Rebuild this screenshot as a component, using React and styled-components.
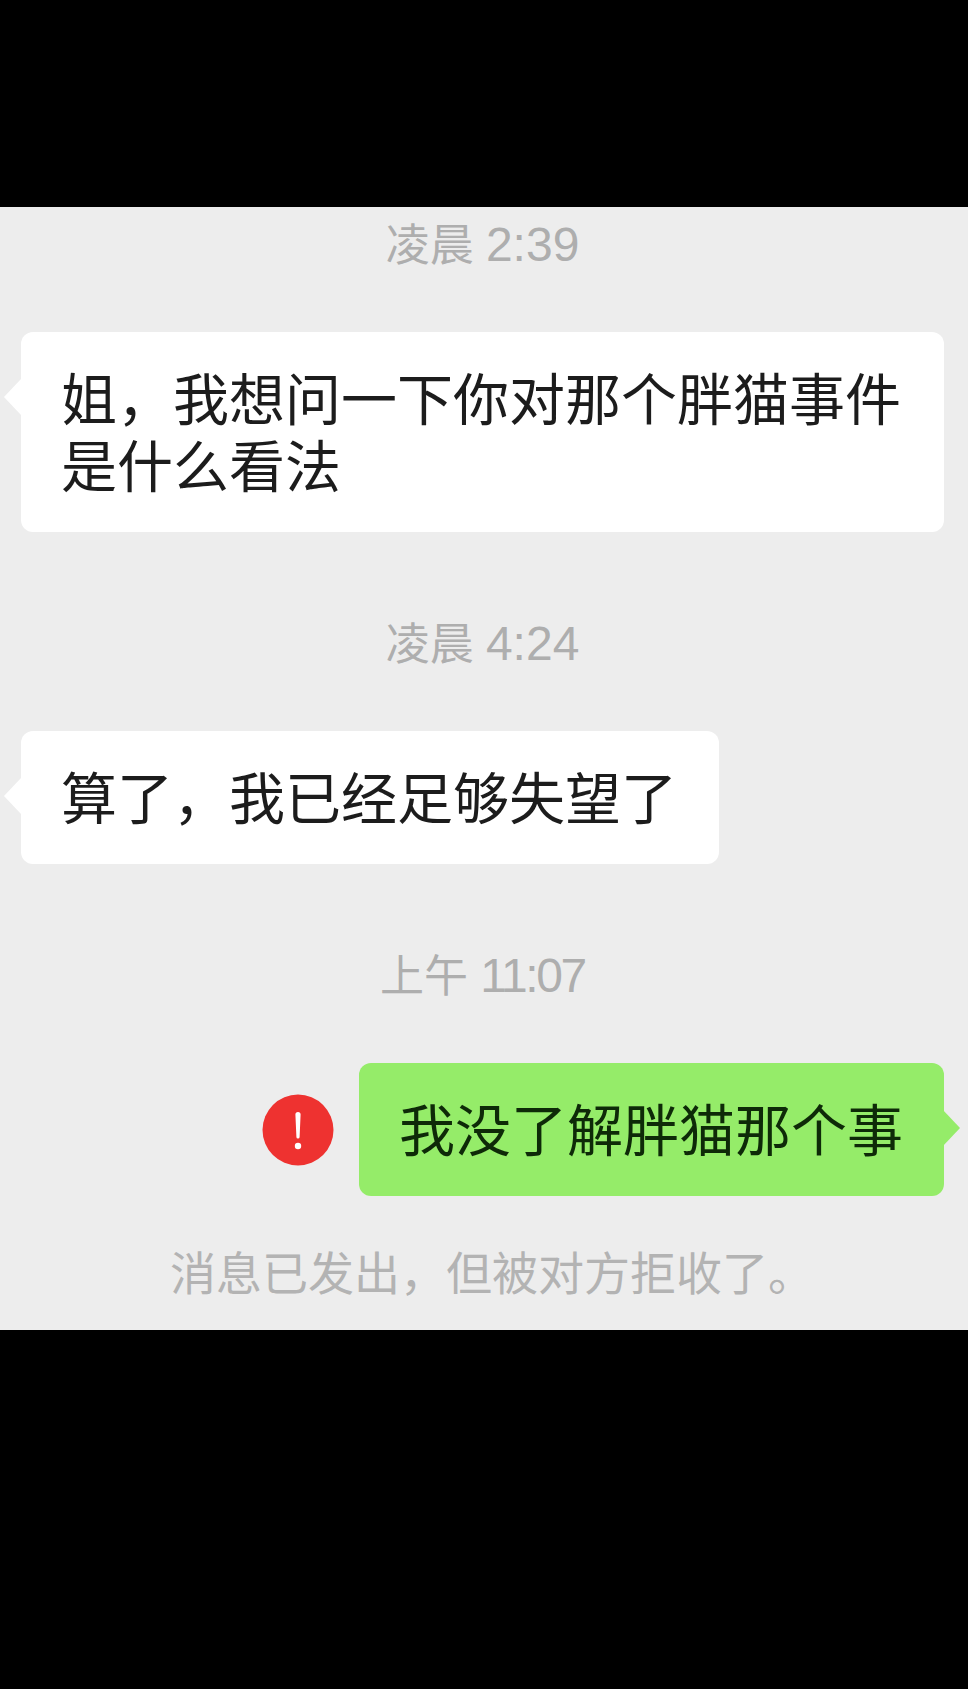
import React from 'react'
import styled, {createGlobalStyle} from 'styled-components'

const GlobalStyle = createGlobalStyle`
  html, body {
    margin: 0;
    padding: 0;
    background: #000;
  }
`

const Page = styled.div`
  display: flex;
  flex-direction: column;
  height: 1689px;
  padding-top: 207px;
  box-sizing: border-box;
  background: #000;
  font-family: "Liberation Sans", "Noto Sans CJK SC", sans-serif;
`

const Chat = styled.div`
  display: flex;
  flex-direction: column;
  height: 1123px;
  box-sizing: border-box;
  padding: 0 24px 0 21px;
  background: #ededed;
`

const Time = styled.div`
  height: 72px;
  margin-top: ${props => props.$first ? 2 : 76}px;
  margin-bottom: 51px;
  line-height: 72px;
  text-align: center;
  font-size: 44px;
  color: #aeaeae;
`

const Digits = styled.span`
  font-size: 48px;
  letter-spacing: ${props => props.$tight ? '-2.4px' : '0'};
`

const Row = styled.div`
  display: flex;
  align-items: center;
  justify-content: ${props => props.$mine ? 'flex-end' : 'flex-start'};
  gap: 25px;
`

const Bubble = styled.div`
  position: relative;
  max-width: 923px;
  box-sizing: border-box;
  padding: 35px ${props => props.$mine ? 41 : 42}px 31px 40px;
  border-radius: 12px;
  font-size: 56px;
  line-height: 67px;
  color: ${props => props.$mine ? '#0e2a08' : '#1c1c1c'};
  background: ${props => props.$mine ? '#95ec69' : '#fff'};

  &::before {
    content: '';
    position: absolute;
    top: 47px;
    ${props => props.$mine ? 'right: -16px;' : 'left: -17px;'}
    width: 17px;
    height: 36px;
    background: inherit;
    clip-path: ${props => props.$mine
      ? 'polygon(0 0, 100% 50%, 0 100%)'
      : 'polygon(100% 0, 0 50%, 100% 100%)'};
  }
`

const Notice = styled.div`
  margin-top: 42px;
  padding-left: 19px;
  line-height: 72px;
  text-align: center;
  font-size: 46px;
  color: #b3b3b3;
`

const ErrorIcon = () => (
  <svg width='72' height='72' viewBox='0 0 72 72'>
    <circle cx='36' cy='36' r='35.5' fill='#ee3230' />
    <path d='M33.4 20.5 a2.6 2.6 0 0 1 5.2 0 L37.6 43 a1.6 1.6 0 0 1 -3.2 0 Z' fill='#fff' />
    <circle cx='36' cy='52' r='3.2' fill='#fff' />
  </svg>
)

export default function App() {
  return (
    <Page lang='zh-CN'>
      <GlobalStyle />
      <Chat>
        <Time $first>凌晨 <Digits>2:39</Digits></Time>
        <Row>
          <Bubble>姐，我想问一下你对那个胖猫事件是什么看法</Bubble>
        </Row>
        <Time>凌晨 <Digits>4:24</Digits></Time>
        <Row>
          <Bubble>算了，我已经足够失望了</Bubble>
        </Row>
        <Time>上午 <Digits $tight>11:07</Digits></Time>
        <Row $mine>
          <ErrorIcon />
          <Bubble $mine>我没了解胖猫那个事</Bubble>
        </Row>
        <Notice>消息已发出，但被对方拒收了。</Notice>
      </Chat>
    </Page>
  )
}
